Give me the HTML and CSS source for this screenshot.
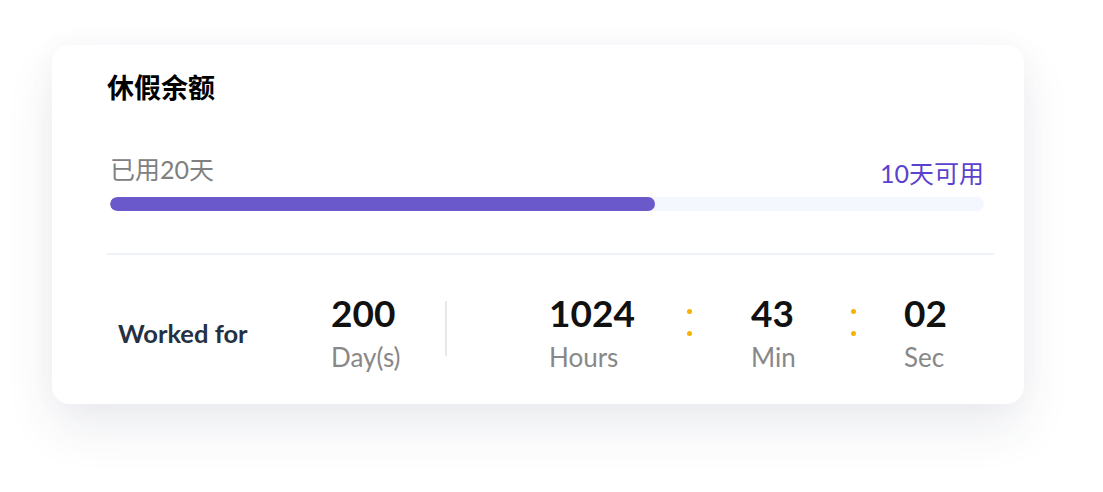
FILE: index.html
```html
<!DOCTYPE html>
<html lang="zh">
<head>
<meta charset="utf-8">
<title>休假余额</title>
<link rel="stylesheet" href="styles.css">
</head>
<body>
<div class="page">
  <section class="card">
    <h2 class="title">休假余额</h2>
    <div class="usage">
      <div class="usage-labels">
        <span class="used">已用20天</span>
        <span class="left">10天可用</span>
      </div>
      <div class="track"><div class="fill" style="width: 62.4%"></div></div>
    </div>
    <hr class="rule">
    <div class="worked">
      <div class="worked-label">Worked for</div>
      <div class="unit unit-day">
        <div class="num">200</div>
        <div class="lbl">Day(s)</div>
      </div>
      <div class="vsep"></div>
      <div class="unit unit-hours">
        <div class="num">1024</div>
        <div class="lbl">Hours</div>
      </div>
      <div class="colon colon-1"><i></i><i></i></div>
      <div class="unit unit-min">
        <div class="num">43</div>
        <div class="lbl">Min</div>
      </div>
      <div class="colon colon-2"><i></i><i></i></div>
      <div class="unit unit-sec">
        <div class="num">02</div>
        <div class="lbl">Sec</div>
      </div>
    </div>
  </section>
</div>
</body>
</html>
```
FILE: styles.css
```css
* { box-sizing: border-box; }
html, body { margin: 0; padding: 0; background: #ffffff; }
body {
  font-family: Lato, "Noto Sans CJK SC", sans-serif;
  width: 1103px;
  height: 492px;
  overflow: hidden;
}
.page {
  padding: 45px 0 0 52px;
}
.card {
  width: 972px;
  height: 359px;
  background: #ffffff;
  border-radius: 18px;
  box-shadow: 0 24px 50px rgba(40, 50, 90, 0.09), 0 0 30px rgba(40, 50, 90, 0.03);
  padding: 24px 30px 0 55px;
}
.title {
  margin: 0;
  font-size: 27px;
  font-weight: 700;
  color: #000000;
  line-height: 38px;
}
.usage {
  margin-top: 46px;
  padding: 0 10px 0 3px;
}
.usage-labels {
  display: flex;
  justify-content: space-between;
  align-items: flex-end;
}
.used {
  font-size: 25px;
  color: #808080;
  line-height: 32px;
  padding-bottom: 4px;
}
.left {
  font-size: 25px;
  color: #5a42cf;
  line-height: 32px;
}
.track {
  margin-top: 8px;
  height: 14px;
  border-radius: 7px;
  background: #f4f7fe;
  overflow: hidden;
}
.fill {
  height: 100%;
  border-radius: 7px;
  background: #6a59cb;
}
.rule {
  margin: 42px 0 0 0;
  border: 0;
  height: 2px;
  background: #eef1f6;
}
.worked {
  display: flex;
  align-items: center;
  margin-top: 37px;
  padding-left: 11px;
}
.worked-label {
  width: 213px;
  font-size: 25.5px;
  font-weight: 700;
  color: #253142;
  line-height: 30px;
  padding-top: 2px;
}
.unit { display: flex; flex-direction: column; }
.num {
  font-size: 37px;
  font-weight: 700;
  color: #111111;
  line-height: 42px;
}
.lbl {
  font-size: 26px;
  color: #888888;
  line-height: 30px;
  margin-top: 8px;
}
.unit-day { width: 114px; }
.vsep {
  width: 2px;
  height: 55px;
  background: #e8e8e8;
  margin-right: 102px;
  align-self: flex-start;
  margin-top: 9px;
}
.unit-hours { width: 138px; }
.colon {
  display: flex;
  flex-direction: column;
  gap: 17px;
  align-self: flex-start;
  margin-top: 17px;
}
.colon i {
  display: block;
  width: 5px;
  height: 5px;
  border-radius: 50%;
  background: #f8b200;
}
.colon-1 { width: 64px; }
.colon-2 { width: 53px; }
.unit-min { width: 100px; }
```
